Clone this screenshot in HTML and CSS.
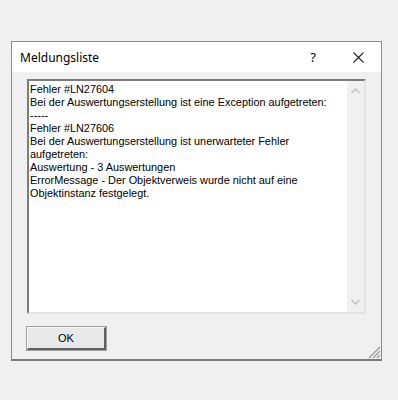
FILE: index.html
```html
<!DOCTYPE html>
<html lang="de">
<head>
    <meta charset="UTF-8">
    <title>Meldungsliste</title>
    <link rel="stylesheet" href="styles.css">
</head>
<body>
    <div class="dialog">
        <div class="titlebar">
            <span class="title">Meldungsliste</span>
            <span class="help">?</span>
            <span class="close">
                <svg width="11" height="11" viewBox="0 0 11 11"><path d="M0.5 0.5 L10.5 10.5 M10.5 0.5 L0.5 10.5" stroke="#222" stroke-width="1.1" fill="none"/></svg>
            </span>
        </div>
        <div class="content">
            <div class="messages">
                <div class="text">
                    Fehler #LN27604<br>
                    Bei der Auswertungserstellung ist eine Exception aufgetreten:<br>
                    -----<br>
                    Fehler #LN27606<br>
                    Bei der Auswertungserstellung ist unerwarteter Fehler aufgetreten:<br>
                    Auswertung - 3 Auswertungen<br>
                    ErrorMessage - Der Objektverweis wurde nicht auf eine Objektinstanz festgelegt.
                </div>
                <div class="scrollbar">
                    <svg width="9" height="6" viewBox="0 0 9 6"><path d="M0.5 5 L4.5 1 L8.5 5" stroke="#c2c2c2" stroke-width="1.5" fill="none"/></svg>
                    <svg width="9" height="6" viewBox="0 0 9 6"><path d="M0.5 1 L4.5 5 L8.5 1" stroke="#c2c2c2" stroke-width="1.5" fill="none"/></svg>
                </div>
            </div>
            <div class="buttons">
                <button class="ok">OK</button>
            </div>
        </div>
        <svg class="grip" width="14" height="14" viewBox="0 0 14 14">
            <path d="M13 2 L2 13 M13 6 L6 13 M13 10 L10 13" stroke="#9a9a9a" stroke-width="1.2" fill="none"/>
        </svg>
    </div>
</body>
</html>
```

FILE: styles.css
```css
body {
    margin: 0;
    background-color: #f0f0f0;
    padding: 41px 0 0 11px;
}
.dialog {
    position: relative;
    width: 369px;
    height: 317px;
    border: 1px solid #8c8c8c;
    border-bottom: 2px solid #7a7a7a;
    background-color: #f0f0f0;
    display: flex;
    flex-direction: column;
}
.titlebar {
    height: 30px;
    background-color: #fff;
    display: flex;
    align-items: center;
    font-family: "Noto Sans", sans-serif;
    font-size: 12px;
    color: #000;
}
.title {
    padding-left: 8px;
    flex: 1;
}
.help {
    width: 20px;
    font-size: 13px;
    margin-right: 30px;
    text-align: center;
}
.close {
    width: 11px;
    height: 11px;
    margin-right: 17px;
    display: flex;
}
.content {
    padding: 7px 15px 0 15px;
}
.messages {
    height: 231px;
    background-color: #fff;
    border-top: 2px solid #7c7c7c;
    border-left: 2px solid #7c7c7c;
    border-right: 2px solid #e3e3e3;
    border-bottom: 2px solid #e3e3e3;
    display: flex;
}
.text {
    flex: 1;
    padding: 2px 2px 2px 1px;
    font-family: "Liberation Sans", Arial, sans-serif;
    font-size: 10.9px;
    line-height: 13px;
    color: #000;
}
.scrollbar {
    width: 17px;
    background-color: #f0f0f0;
    display: flex;
    flex-direction: column;
    justify-content: space-between;
    align-items: center;
    padding: 7px 0 7px 0;
}
.buttons {
    padding-top: 13px;
}
.ok {
    width: 79px;
    height: 23px;
    background-color: #e9e9e9;
    border-top: 1px solid #f8f8f8;
    border-left: 1px solid #f8f8f8;
    border-right: 2px solid #606060;
    border-bottom: 2px solid #606060;
    outline: 1px solid #a0a0a0;
    font-family: "Liberation Sans", Arial, sans-serif;
    font-size: 11px;
    color: #000;
    padding: 0;
}
.grip {
    position: absolute;
    right: 0;
    bottom: 0;
}
```
